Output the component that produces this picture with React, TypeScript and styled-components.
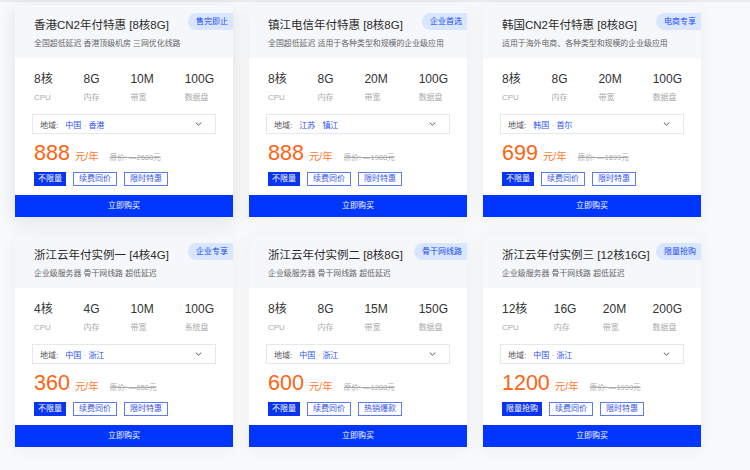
import { createGlobalStyle, styled } from "styled-components";

type Spec = { value: string; label: string };

type Plan = {
  title: string;
  desc: string;
  badge: string;
  specs: Spec[];
  region: string;
  price: string;
  original: string;
  tags: string[];
  hover?: boolean;
};

const plans: Plan[] = [
  {
    title: "香港CN2年付特惠 [8核8G]",
    desc: "全国超低延迟 香港顶级机房 三网优化线路",
    badge: "售完即止",
    specs: [
      { value: "8核", label: "CPU" },
      { value: "8G", label: "内存" },
      { value: "10M", label: "带宽" },
      { value: "100G", label: "数据盘" },
    ],
    region: "中国 · 香港",
    price: "888",
    original: "2688元",
    tags: ["不限量", "续费同价", "限时特惠"],
    hover: true,
  },
  {
    title: "镇江电信年付特惠 [8核8G]",
    desc: "全国超低延迟 适用于各种类型和规模的企业级应用",
    badge: "企业首选",
    specs: [
      { value: "8核", label: "CPU" },
      { value: "8G", label: "内存" },
      { value: "20M", label: "带宽" },
      { value: "100G", label: "数据盘" },
    ],
    region: "江苏 · 镇江",
    price: "888",
    original: "1988元",
    tags: ["不限量", "续费同价", "限时特惠"],
  },
  {
    title: "韩国CN2年付特惠 [8核8G]",
    desc: "适用于海外电商、各种类型和规模的企业级应用",
    badge: "电商专享",
    specs: [
      { value: "8核", label: "CPU" },
      { value: "8G", label: "内存" },
      { value: "20M", label: "带宽" },
      { value: "100G", label: "数据盘" },
    ],
    region: "韩国 · 首尔",
    price: "699",
    original: "1699元",
    tags: ["不限量", "续费同价", "限时特惠"],
  },
  {
    title: "浙江云年付实例一 [4核4G]",
    desc: "企业级服务器 骨干网线路 超低延迟",
    badge: "企业专享",
    specs: [
      { value: "4核", label: "CPU" },
      { value: "4G", label: "内存" },
      { value: "10M", label: "带宽" },
      { value: "100G", label: "系统盘" },
    ],
    region: "中国 · 浙江",
    price: "360",
    original: "650元",
    tags: ["不限量", "续费同价", "限时特惠"],
  },
  {
    title: "浙江云年付实例二 [8核8G]",
    desc: "企业级服务器 骨干网线路 超低延迟",
    badge: "骨干网线路",
    specs: [
      { value: "8核", label: "CPU" },
      { value: "8G", label: "内存" },
      { value: "15M", label: "带宽" },
      { value: "150G", label: "数据盘" },
    ],
    region: "中国 · 浙江",
    price: "600",
    original: "1288元",
    tags: ["不限量", "续费同价", "热销爆款"],
  },
  {
    title: "浙江云年付实例三 [12核16G]",
    desc: "企业级服务器 骨干网线路 超低延迟",
    badge: "限量抢购",
    specs: [
      { value: "12核", label: "CPU" },
      { value: "16G", label: "内存" },
      { value: "20M", label: "带宽" },
      { value: "200G", label: "数据盘" },
    ],
    region: "中国 · 浙江",
    price: "1200",
    original: "1999元",
    tags: ["限量抢购", "续费同价", "限时特惠"],
  },
];

const Chevron = () => (
  <svg width="7" height="4" viewBox="0 0 7 4">
    <path d="M0.8 0.6l2.7 2.6 2.7-2.6" fill="none" stroke="#555" strokeWidth="1" />
  </svg>
);

const PlanCard = ({ plan }: { plan: Plan }) => {
  const [country, city] = plan.region.split(" · ");
  return (
    <Card $hover={plan.hover}>
      <Header>
        <Title>{plan.title}</Title>
        <Desc>{plan.desc}</Desc>
        <Badge>{plan.badge}</Badge>
      </Header>
      <Body>
        <Specs>
          {plan.specs.map((s) => (
            <SpecItem key={s.label}>
              <SpecValue>{s.value}</SpecValue>
              <SpecLabel>{s.label}</SpecLabel>
            </SpecItem>
          ))}
        </Specs>
        <Select>
          <SelectLabel>地域:</SelectLabel>
          <SelectValue>
            {country} <Dot>·</Dot> {city}
          </SelectValue>
          <Chevron />
        </Select>
        <PriceRow>
          <Price>{plan.price}</Price>
          <Unit>元/年</Unit>
          <Original>原价: —{plan.original}</Original>
        </PriceRow>
        <Tags>
          {plan.tags.map((t, i) => (
            <Tag key={t} $filled={i === 0}>
              {t}
            </Tag>
          ))}
        </Tags>
      </Body>
      <BuyButton>立即购买</BuyButton>
    </Card>
  );
};

export default function App() {
  return (
    <>
      <GlobalStyle />
      <Page>
        <TopLine />
        <Grid>
          {plans.map((p) => (
            <PlanCard key={p.title} plan={p} />
          ))}
        </Grid>
      </Page>
    </>
  );
}

const GlobalStyle = createGlobalStyle`
  html, body {
    margin: 0;
    padding: 0;
    background: #f8f9fb;
  }
  body {
    font-family: "Liberation Sans", "Noto Sans CJK SC", sans-serif;
    color: #333;
  }
`;

const Page = styled.div`
  width: 750px;
  height: 470px;
  overflow: hidden;
  background: #f8f9fb;
`;

const TopLine = styled.div`
  height: 2px;
  background: #ebebeb;
`;

const Grid = styled.div`
  display: grid;
  grid-template-columns: repeat(3, 218px);
  column-gap: 16px;
  row-gap: 18px;
  padding: 3px 0 0 15px;
`;

const Card = styled.div<{ $hover?: boolean }>`
  display: flex;
  flex-direction: column;
  background: #fff;
  box-shadow: ${(p) =>
    p.$hover
      ? "0 4px 18px rgba(0, 0, 0, 0.1)"
      : "0 2px 16px rgba(0, 0, 0, 0.05)"};
`;

const Header = styled.div`
  position: relative;
  height: 53px;
  box-sizing: border-box;
  padding: 12px 16px 0 19px;
  background: #f5f7fa;
`;

const Title = styled.div`
  font-size: 11.5px;
  line-height: 16px;
  color: #2b2b2b;
  white-space: nowrap;
`;

const Desc = styled.div`
  margin-top: 5px;
  font-size: 7.9px;
  line-height: 11px;
  color: #666;
  white-space: nowrap;
`;

const Badge = styled.div`
  position: absolute;
  top: 8px;
  right: 0;
  height: 17px;
  padding: 0 5px 0 8px;
  border-radius: 9px 0 0 9px;
  background: #d9e6ff;
  color: #2248f2;
  font-size: 8px;
  line-height: 17px;
  white-space: nowrap;
`;

const Body = styled.div`
  padding: 13px 17px 9px 17px;
`;

const Specs = styled.div`
  display: flex;
  justify-content: space-between;
  padding: 0 2px;
`;

const SpecItem = styled.div`
  display: flex;
  flex-direction: column;
`;

const SpecValue = styled.div`
  font-size: 12px;
  line-height: 16px;
  color: #333;
`;

const SpecLabel = styled.div`
  margin-top: 5px;
  font-size: 8px;
  line-height: 11px;
  color: #aaa;
`;

const Select = styled.div`
  display: flex;
  align-items: center;
  margin-top: 11px;
  height: 20px;
  box-sizing: border-box;
  padding: 0 13px 0 7px;
  border: 1px solid #e6e8eb;
  font-size: 8px;
`;

const SelectLabel = styled.span`
  color: #555;
  margin-right: 7px;
`;

const SelectValue = styled.span`
  flex: 1;
  color: #2a4ff5;
`;

const Dot = styled.span`
  color: #8aa0f5;
`;

const PriceRow = styled.div`
  display: flex;
  align-items: baseline;
  margin-top: 7px;
  height: 24px;
  padding-left: 2px;
`;

const Price = styled.span`
  font-size: 21.5px;
  line-height: 24px;
  color: #ff6310;
`;

const Unit = styled.span`
  margin-left: 5px;
  font-size: 10.5px;
  color: #ff7a2e;
`;

const Original = styled.span`
  margin-left: 11px;
  font-size: 7.5px;
  color: #aaa;
  text-decoration: line-through;
`;

const Tags = styled.div`
  display: flex;
  gap: 7px;
  margin-top: 7px;
  padding-left: 2px;
`;

const Tag = styled.span<{ $filled?: boolean }>`
  height: 14px;
  box-sizing: border-box;
  padding: 0 ${(p) => (p.$filled ? "3px" : "5px")};
  border: 1px solid ${(p) => (p.$filled ? "#0a35f0" : "#5b7cf5")};
  background: ${(p) => (p.$filled ? "#0a35f0" : "#fff")};
  color: ${(p) => (p.$filled ? "#fff" : "#3552e6")};
  font-size: 8px;
  line-height: 12px;
  white-space: nowrap;
`;

const BuyButton = styled.div`
  height: 22px;
  background: #0036ff;
  color: #fff;
  font-size: 8px;
  line-height: 22px;
  text-align: center;
`;
